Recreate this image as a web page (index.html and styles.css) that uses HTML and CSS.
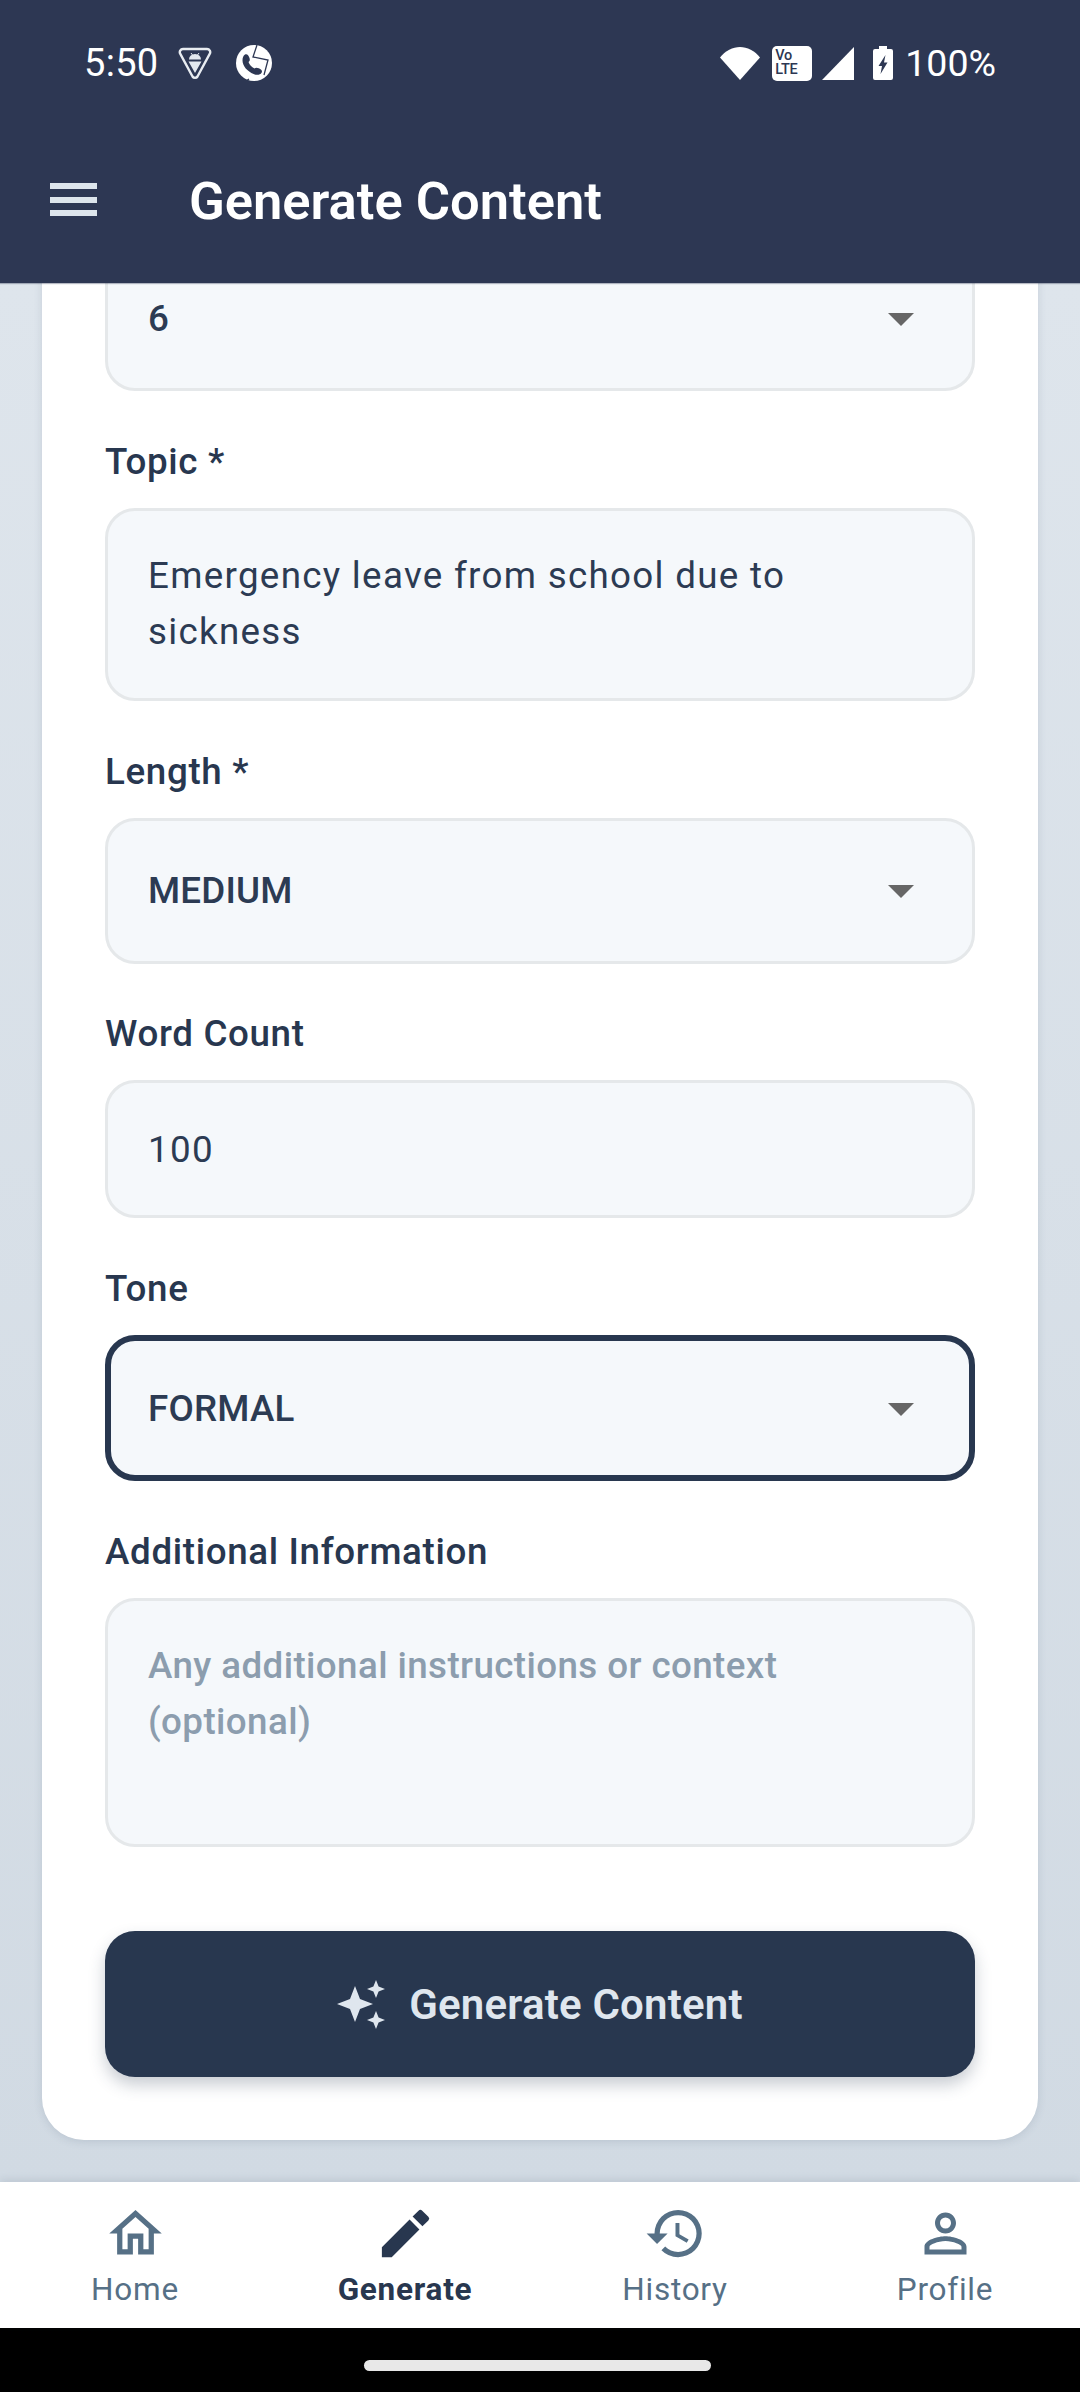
FILE: index.html
```html
<!DOCTYPE html>
<html lang="en">
<head>
<meta charset="utf-8">
<title>Generate Content</title>
<link rel="stylesheet" href="styles.css">
</head>
<body>
<div class="screen">
  <header class="appbar">
    <div class="status">
      <div class="status-left">
        <span class="time">5:50</span>
        <svg class="st-tri" viewBox="0 0 34 33"><path d="M5 2h24a3.200 3.200 0 0 1 2.700 4.900L19.500 29.500a3 3 0 0 1-5 0L2.300 6.900A3.200 3.200 0 0 1 5 2z" fill="none" stroke="#e8ecf1" stroke-width="2.400"/><path d="M11 12.500a6 5.500 0 0 1 12 0zM10.500 14.500h13L17 26z" fill="#e3e8ee"/><path d="M13 6l1.500 2M21 6l-1.500 2" stroke="#e3e8ee" stroke-width="1"/></svg>
        <svg class="st-globe" viewBox="0 0 36 36"><circle cx="18" cy="18" r="18" fill="#fff"/><path d="M9 9.500c2-1 3.500.5 4.500 3.500.6 2 .3 3-1 4 1 3 3 5 6 6.500 1-1 2.300-1.200 4.300-.2 2.800 1.400 3.800 2.700 2.800 4.400-1.400 2.200-4.800 2.600-8 1.300C11.500 26.500 6.500 21 6.500 15.500c0-2.700.7-4.900 2.500-6z" fill="#2d3753"/><path d="M21 0l-4 12 15 3-4 15M13 34l-3 2" stroke="#2d3753" stroke-width="1.300" fill="none"/></svg>
      </div>
      <div class="status-right">
        <svg class="st-wifi" viewBox="0 0 40 33"><path d="M0 10.500C5 4 13 0 20 0s15 4 20 10.500L20 33z" fill="#fff"/></svg>
        <span class="volte"><span>Vo</span><span>LTE</span></span>
        <svg class="st-signal" viewBox="0 0 32 33"><path d="M32 0v33H0z" fill="#fff"/></svg>
        <svg class="st-batt" viewBox="0 0 20 34"><path d="M6 0h8v3h4a2 2 0 0 1 2 2v27a2 2 0 0 1-2 2H2a2 2 0 0 1-2-2V5a2 2 0 0 1 2-2h4z" fill="#fff"/><path d="M12.500 9L5.500 20H9L7.500 28 14.500 16.500H11z" fill="#2d3753"/></svg>
        <span class="pct">100%</span>
      </div>
    </div>
    <div class="toolbar">
      <div class="menu"><i></i><i></i><i></i></div>
      <h1>Generate Content</h1>
    </div>
  </header>

  <main class="content">
    <form class="card">
      <div class="field">
        <div class="box select first"><span>6</span><b class="caret"></b></div>
      </div>
      <div class="field">
        <label>Topic *</label>
        <div class="box area topic">Emergency leave from school due to sickness</div>
      </div>
      <div class="field">
        <label>Length *</label>
        <div class="box select"><span>MEDIUM</span><b class="caret"></b></div>
      </div>
      <div class="field">
        <label>Word Count</label>
        <div class="box input">100</div>
      </div>
      <div class="field">
        <label>Tone</label>
        <div class="box select focus"><span>FORMAL</span><b class="caret"></b></div>
      </div>
      <div class="field">
        <label>Additional Information</label>
        <div class="box area info">Any additional instructions or context (optional)</div>
      </div>
      <button class="cta" type="button">
        <svg viewBox="0 0 49 49" class="spark"><path d="M18 6l5 13 13 5-13 5-5 13-5-13L0 24l13-5zM39 0l2.600 6.400L48 9l-6.400 2.600L39 18l-2.600-6.400L30 9l6.400-2.600zM39 31l2.600 6.400L48 40l-6.400 2.600L39 49l-2.600-6.400L30 40l6.400-2.600z" fill="#dfe6ee"/></svg>
        <span>Generate Content</span>
      </button>
    </form>
  </main>

  <nav class="tabs">
    <a class="tab">
      <svg viewBox="0 0 24 24"><path d="M12 5.690l5 4.500V18h-2v-6H9v6H7v-7.810l5-4.500M12 3L2 12h3v8h6v-6h2v6h6v-8h3L12 3z"/></svg>
      <span>Home</span>
    </a>
    <a class="tab active">
      <svg viewBox="0 0 24 24"><path d="M3 17.250V21h3.750L17.300 10.450l-3.750-3.750zM14.700 5.500l3.750 3.750 2.260-2.210a1 1 0 0 0 0-1.410l-2.340-2.340a1 1 0 0 0-1.410 0z"/></svg>
      <span>Generate</span>
    </a>
    <a class="tab">
      <svg viewBox="0 0 24 24"><path d="M13 3a9 9 0 0 0-9 9H1l3.890 3.890.07.140L9 12H6a7 7 0 1 1 7 7c-1.930 0-3.680-.79-4.940-2.060l-1.420 1.420A8.954 8.954 0 0 0 13 21a9 9 0 0 0 0-18zm-1 5v5l4.280 2.540.72-1.210-3.500-2.080V8H12z"/></svg>
      <span>History</span>
    </a>
    <a class="tab">
      <svg viewBox="0 0 24 24"><path d="M12 5.900a2.100 2.100 0 1 1 0 4.200 2.100 2.100 0 0 1 0-4.200m0 9c2.970 0 6.100 1.460 6.100 2.100v1.100H5.900V17c0-.64 3.130-2.100 6.100-2.100M12 4C9.790 4 8 5.790 8 8s1.790 4 4 4 4-1.790 4-4-1.790-4-4-4zm0 9c-2.670 0-8 1.340-8 4v3h16v-3c0-2.660-5.330-4-8-4z"/></svg>
      <span>Profile</span>
    </a>
  </nav>

  <div class="gesture"><i></i></div>
</div>
</body>
</html>
```

FILE: styles.css
```css
* { box-sizing: border-box; }
html, body { margin: 0; padding: 0; }
body { font-family: Roboto, "Liberation Sans", sans-serif; background: #000; }

.screen {
  width: 1080px;
  height: 2392px;
  display: flex;
  flex-direction: column;
  overflow: hidden;
}

.appbar {
  height: 283px;
  flex: none;
  background: #2d3753;
  color: #fff;
  position: relative;
  z-index: 2;
  box-shadow: 0 1px 1px rgba(45, 55, 83, .35);
}
.status {
  height: 126px;
  padding: 0 84px 0 84px;
  display: flex;
  justify-content: space-between;
  align-items: center;
}
.status-left, .status-right { display: flex; align-items: center; }
.time { font-size: 38px; letter-spacing: .3px; }
.st-tri { width: 34px; height: 33px; margin-left: 20px; }
.st-globe { width: 36px; height: 36px; margin-left: 24px; }
.st-wifi { width: 40px; height: 33px; margin-right: 12px; }
.volte {
  width: 40px; height: 35px;
  background: #fff;
  color: #2d3753;
  border-radius: 5px;
  font-size: 14.500px;
  font-weight: 500;
  letter-spacing: -.3px;
  line-height: 14px;
  padding: 3px 0 0 3px;
  display: flex;
  flex-direction: column;
  margin-right: 10px;
}
.st-signal { width: 32px; height: 33px; margin-right: 19px; }
.st-batt { width: 20px; height: 34px; margin-right: 12px; }
.pct { font-size: 37.500px; }

.toolbar {
  height: 157px;
  display: flex;
  align-items: center;
  padding: 0 0 8px 50px;
}
.menu { width: 47px; display: flex; flex-direction: column; gap: 7.500px; margin-right: 92px; margin-top: -2px; }
.menu i { display: block; height: 6px; background: #dde5ec; }
.toolbar h1 { margin: 0; font-size: 52.500px; font-weight: 600; line-height: 60px; }

.content {
  flex: 1;
  min-height: 0;
  overflow: hidden;
  padding: 0 42px;
  background: linear-gradient(180deg, #dee5ec, #d1dae3);
}
.card {
  margin-top: -100px;
  height: 1957px;
  background: #fff;
  border-radius: 42px;
  padding: 0 63px;
  box-shadow: 0 2px 9px rgba(60, 80, 110, .15);
  display: flex;
  flex-direction: column;
}
.field { display: flex; flex-direction: column; margin-bottom: 49.800px; }
.field label {
  font-size: 36.750px;
  font-weight: 500;
  letter-spacing: .65px;
  line-height: 40px;
  color: #28374f;
  margin-top: 1px;
  margin-bottom: 26px;
}
.box {
  background: #f5f8fb;
  border: 3px solid #e5e8ea;
  border-radius: 30px;
  color: #2c3b53;
  font-size: 36.750px;
  padding: 0 40px;
  letter-spacing: 1.300px;
}
.select {
  height: 146px;
  display: flex;
  align-items: center;
  justify-content: space-between;
  font-weight: 500;
  letter-spacing: .2px;
  padding-right: 58px;
}
.select.first { height: 208px; padding-top: 62px; }
.caret {
  width: 0; height: 0;
  margin-top: 2px;
  border-left: 13px solid transparent;
  border-right: 13px solid transparent;
  border-top: 13px solid #666;
}
.focus { border: 6px solid #28374f; padding-left: 37px; padding-right: 55px; height: 146px; }
.area { line-height: 56px; padding-top: 37px; }
.topic { height: 193px; }
.info { height: 249px; color: #8c9dae; font-weight: 500; letter-spacing: .4px; }
.input { height: 138px; display: flex; align-items: center; }

.cta {
  margin-top: 34.400px;
  height: 146px;
  width: 100%;
  border: 0;
  border-radius: 30px;
  background: #28374f;
  color: #dfe6ee;
  font: 600 42px Roboto, "Liberation Sans", sans-serif;
  letter-spacing: .2px;
  display: flex;
  align-items: center;
  justify-content: center;
  gap: 23px;
  box-shadow: 0 8px 16px rgba(40, 55, 79, .25);
}
.spark { width: 49px; height: 49px; }

.tabs {
  flex: none;
  height: 146px;
  background: #fff;
  display: grid;
  grid-template-columns: repeat(4, 1fr);
  box-shadow: 0 -2px 8px rgba(40, 55, 79, .12);
  position: relative;
}
.tab {
  display: flex;
  flex-direction: column;
  align-items: center;
  padding-top: 20px;
  color: #567086;
  font-size: 31.500px;
  letter-spacing: .75px;
  line-height: 36px;
}
.tab svg { width: 63px; height: 63px; fill: currentColor; margin-bottom: 7px; }
.tab.active { color: #28374f; font-weight: 700; letter-spacing: .75px; }

.gesture {
  flex: none;
  height: 64px;
  background: #000;
  display: flex;
  justify-content: center;
  padding-top: 32px;
}
.gesture i { display: block; width: 347px; height: 11px; border-radius: 6px; background: #e8e8e8; margin-left: -5px; }
```
